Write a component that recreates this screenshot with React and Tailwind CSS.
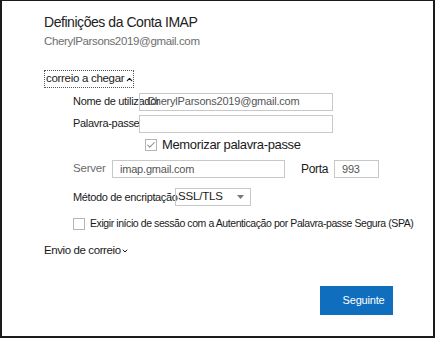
import { Check, ChevronUp, ChevronDown } from 'lucide-react';

const font = { fontFamily: '"Liberation Sans", Arial, sans-serif' };

function Field({ className, value }) {
  return (
    <div
      className={`h-[18px] border border-[#c8c8c8] flex items-center px-[7px] text-[11px] text-[#555] tracking-[-0.2px] ${className}`}
    >
      {value}
    </div>
  );
}

export default function App() {
  return (
    <div
      className="w-[435px] h-[338px] bg-white border-l-2 border-t border-r-2 border-b-2 border-[#1b1b1b] text-[#1a1a1a] overflow-hidden"
      style={font}
    >
      <div className="pl-[42px] pt-[12px]">
        <h1 className="text-[14px] leading-[18px] tracking-[-0.45px] text-[#222]">
          Definições da Conta IMAP
        </h1>
        <p className="mt-[2px] text-[11.5px] leading-[16px] tracking-[-0.35px] text-[#6e6e6e]">
          CherylParsons2019@gmail.com
        </p>

        <div className="mt-[21px] w-[90px] h-[18px] border border-dotted border-[#555] flex items-center pl-[1px] whitespace-nowrap text-[11.5px] tracking-[-0.3px]">
          correio a chegar
          <ChevronUp className="w-[9px] h-[9px] ml-[1px] shrink-0" strokeWidth={3} />
        </div>
      </div>

      <div className="pl-[71px]">
        <div className="mt-[5px] flex items-center h-[17px]">
          <span className="w-[66px] shrink-0 whitespace-nowrap text-[11px] tracking-[-0.3px]">
            Nome de utilizador
          </span>
          <Field className="w-[194px] h-[17px]" value="CherylParsons2019@gmail.com" />
        </div>

        <div className="mt-[5px] flex items-center h-[17px]">
          <span className="w-[66px] shrink-0 whitespace-nowrap text-[11px] tracking-[-0.3px]">
            Palavra-passe
          </span>
          <Field className="w-[194px] h-[17px]" value="" />
        </div>

        <div className="mt-[7px] flex items-center h-[12px] pl-[72px]">
          <div className="w-[12px] h-[12px] border border-[#b5b5b5] flex items-center justify-center">
            <Check className="w-[10px] h-[10px] text-[#8a8a8a]" strokeWidth={2.5} />
          </div>
          <span className="ml-[5px] text-[13px] tracking-[-0.35px]">Memorizar palavra-passe</span>
        </div>

        <div className="mt-[9px] flex items-center h-[18px]">
          <span className="w-[39px] text-[11.5px] text-[#6b6b6b] tracking-[-0.2px]">Server</span>
          <Field className="w-[173px]" value="imap.gmail.com" />
          <span className="ml-[16px] w-[33px] text-[12px] tracking-[-0.3px]">Porta</span>
          <Field className="w-[45px]" value="993" />
        </div>

        <div className="mt-[10px] flex items-center h-[18px]">
          <span className="w-[102px] whitespace-nowrap text-[11px] tracking-[-0.35px]">
            Método de encriptação
          </span>
          <div className="w-[76px] h-[18px] border border-[#c8c8c8] flex items-center justify-between pl-[2px] pr-[6px] text-[11.5px] tracking-[-0.2px]">
            SSL/TLS
            <svg width="7" height="4" viewBox="0 0 7 4">
              <path d="M0 0h7L3.5 4z" fill="#777" />
            </svg>
          </div>
        </div>

        <div className="mt-[11px] flex items-center h-[13px]">
          <div className="w-[12px] h-[12px] border border-[#b5b5b5]" />
          <span className="ml-[5px] whitespace-nowrap text-[10.5px] tracking-[-0.42px]">
            Exigir início de sessão com a Autenticação por Palavra-passe Segura (SPA)
          </span>
        </div>
      </div>

      <div className="pl-[42px] mt-[13px] flex items-center h-[16px] text-[11.5px] tracking-[-0.4px]">
        Envio de correio
        <ChevronDown className="w-[8px] h-[8px]" strokeWidth={3} />
      </div>

      <div className="flex justify-end pr-[40px] mt-[27px]">
        <button className="w-[73px] h-[29px] bg-[#106ebe] text-white text-[11px] tracking-[-0.2px] pl-[14px]">
          Seguinte
        </button>
      </div>
    </div>
  );
}
